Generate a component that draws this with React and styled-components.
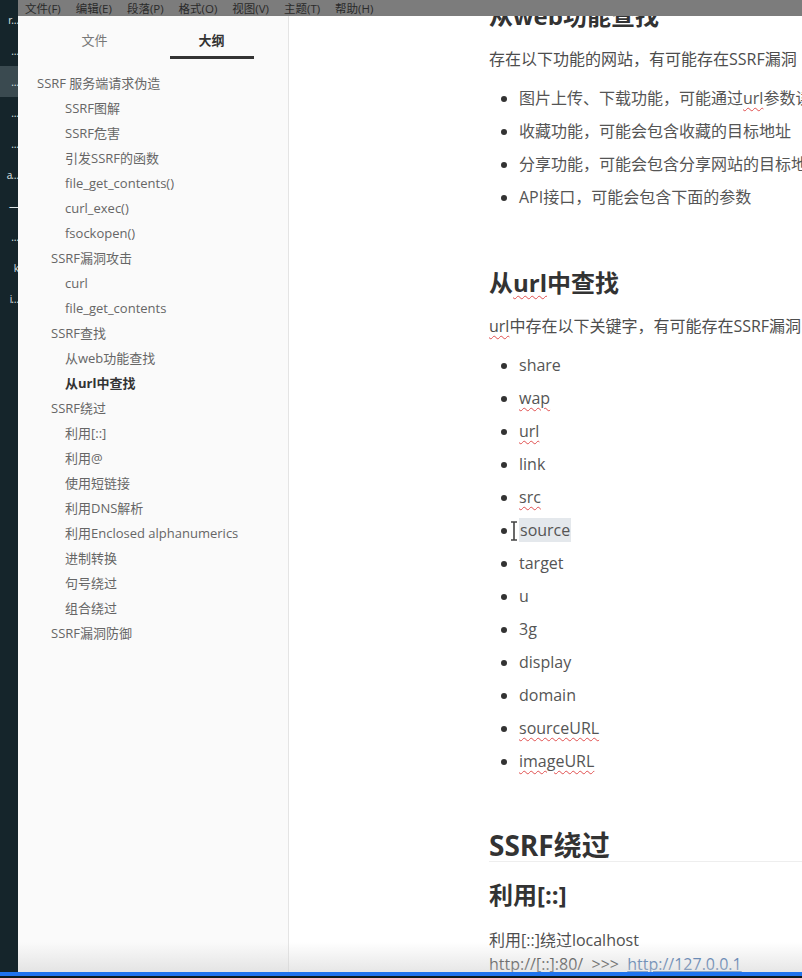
import React from "react";
import styled, { createGlobalStyle } from "styled-components";

const GlobalStyle = createGlobalStyle`
  html, body {
    margin: 0;
    padding: 0;
    background: #ffffff;
    overflow: hidden;
  }
  body {
    font-family: "Open Sans", "Noto Sans CJK SC", sans-serif;
  }
`;

const Screen = styled.div`
  width: 802px;
  height: 978px;
  display: flex;
  flex-direction: column;
  position: relative;
  overflow: hidden;
  background: #15252b;
`;

const Body = styled.div`
  flex: 1;
  display: flex;
  min-height: 0;
`;

const Strip = styled.div`
  width: 18px;
  flex-shrink: 0;
  background: #15252b;
  display: flex;
  flex-direction: column;
  padding-top: 4px;
`;

const StripItem = styled.div`
  height: 31px;
  display: flex;
  align-items: center;
  justify-content: flex-end;
  font-size: 10px;
  line-height: 1;
  color: #dfe6e8;
  letter-spacing: -1px;
  overflow: hidden;
  white-space: nowrap;
  background: ${(p) => (p.active ? "#3a4a50" : "transparent")};
`;

const Window = styled.div`
  flex: 1;
  display: flex;
  flex-direction: column;
  min-width: 0;
  position: relative;
`;

const MenuBar = styled.div`
  height: 16px;
  background: #7c7c7c;
  display: flex;
  align-items: center;
  gap: 15px;
  padding-left: 7px;
  font-size: 11.5px;
  color: #2a2a2a;
  white-space: nowrap;
`;

const Panes = styled.div`
  flex: 1;
  display: flex;
  min-height: 0;
`;

const Sidebar = styled.aside`
  width: 270px;
  flex-shrink: 0;
  background: #fafafa;
  border-right: 1px solid #e4e4e4;
  box-shadow: 1px 0 2px rgba(0, 0, 0, 0.03);
`;

const Tabs = styled.div`
  display: grid;
  grid-template-columns: 117px 117px;
  padding: 0 18px;
`;

const Tab = styled.div`
  height: 43px;
  display: flex;
  flex-direction: column;
  align-items: center;
  font-size: 13px;
  font-weight: ${(p) => (p.active ? 700 : 400)};
  color: ${(p) => (p.active ? "#333" : "#777")};

  span {
    line-height: 18px;
    margin-top: 15px;
  }

  &::after {
    content: "";
    margin-top: auto;
    width: 84px;
    height: 3px;
    background: ${(p) => (p.active ? "#333" : "transparent")};
  }
`;

const Outline = styled.ul`
  list-style: none;
  margin: 12px 0 0;
  padding: 0;
`;

const OutlineItem = styled.li`
  height: 25px;
  line-height: 25px;
  font-size: 13px;
  white-space: nowrap;
  padding-left: ${(p) => 19 + (p.level - 1) * 14}px;
  color: ${(p) => (p.active ? "#333" : "#666")};
  font-weight: ${(p) => (p.active ? 700 : 400)};
`;

const Main = styled.main`
  flex: 1;
  min-width: 0;
  overflow: hidden;
  background: #ffffff;
`;

const Article = styled.article`
  width: 760px;
  padding-left: 200px;
  color: #4d4d4d;
  white-space: nowrap;
`;

const H2 = styled.h2`
  margin: ${(p) => p.mt}px 0 0;
  font-size: 28px;
  line-height: 32px;
  font-weight: 700;
  color: #333;
  border-bottom: 1px solid #eeeeee;
`;

const H3 = styled.h3`
  margin: ${(p) => p.mt}px 0 0;
  font-size: 24px;
  line-height: 34px;
  font-weight: 700;
  color: #333;
`;

const P = styled.p`
  margin: ${(p) => p.mt || 0}px 0 0;
  font-size: 16px;
  line-height: 24px;
  color: ${(p) => (p.dark ? "#3a3a3a" : "inherit")};
`;

const List = styled.ul`
  margin: ${(p) => p.mt}px 0 0;
  padding-left: 30px;
  list-style: disc;

  li::marker {
    color: #333;
  }
`;

const Item = styled.li`
  position: relative;
  font-size: 16px;
  line-height: 33px;
  color: #555;
`;

const Typo = styled.span`
  text-decoration: underline wavy #e05050;
  text-decoration-thickness: 1px;
  text-underline-offset: 3px;
`;

const Selected = styled.span`
  background: #e4e8ec;
  padding: 1px 1px;
`;

const Caret = styled.svg`
  position: absolute;
  left: -9px;
  top: 7px;
`;

const Link = styled.a`
  color: #3f6eaa;
  text-decoration: underline;
`;

const Shade = styled.div`
  position: absolute;
  left: 0;
  right: 0;
  bottom: 0;
  height: 30px;
  background: linear-gradient(to bottom, rgba(210, 210, 210, 0), rgba(210, 210, 210, 0.55));
  pointer-events: none;
`;

const BlueBar = styled.div`
  height: 4px;
  background: #1f73ee;
  flex-shrink: 0;
`;

const Bottom = styled.div`
  height: 2px;
  background: #0d1a1f;
  flex-shrink: 0;
`;

const stripItems = ["r…", "…", "…", "…", "…", "a…", "—", "…", "k", "i…"];

const menus = ["文件(F)", "编辑(E)", "段落(P)", "格式(O)", "视图(V)", "主题(T)", "帮助(H)"];

const outline = [
  [1, "SSRF 服务端请求伪造"],
  [3, "SSRF图解"],
  [3, "SSRF危害"],
  [3, "引发SSRF的函数"],
  [3, "file_get_contents()"],
  [3, "curl_exec()"],
  [3, "fsockopen()"],
  [2, "SSRF漏洞攻击"],
  [3, "curl"],
  [3, "file_get_contents"],
  [2, "SSRF查找"],
  [3, "从web功能查找"],
  [3, "从url中查找", true],
  [2, "SSRF绕过"],
  [3, "利用[::]"],
  [3, "利用@"],
  [3, "使用短链接"],
  [3, "利用DNS解析"],
  [3, "利用Enclosed alphanumerics"],
  [3, "进制转换"],
  [3, "句号绕过"],
  [3, "组合绕过"],
  [2, "SSRF漏洞防御"],
];

const keywords = [
  "share",
  "wap*",
  "url*",
  "link",
  "src*",
  "source!",
  "target",
  "u",
  "3g",
  "display",
  "domain",
  "sourceURL*",
  "imageURL*",
];

const renderKeyword = (k) => {
  if (k.endsWith("*")) return <Typo>{k.slice(0, -1)}</Typo>;
  if (k.endsWith("!"))
    return (
      <>
        <Caret width="8" height="20" viewBox="0 0 8 20">
          <path d="M1 1h6M4 1v18M1 19h6" stroke="#444" strokeWidth="1.6" fill="none" />
        </Caret>
        <Selected>{k.slice(0, -1)}</Selected>
      </>
    );
  return k;
};

export default function App() {
  return (
    <>
      <GlobalStyle />
      <Screen>
        <Body>
          <Strip>
            {stripItems.map((s, i) => (
              <StripItem key={i} active={i === 2}>
                {s}
              </StripItem>
            ))}
          </Strip>
          <Window>
            <MenuBar>
              {menus.map((m) => (
                <span key={m}>{m}</span>
              ))}
            </MenuBar>
            <Panes>
              <Sidebar>
                <Tabs>
                  <Tab>
                    <span>文件</span>
                  </Tab>
                  <Tab active>
                    <span>大纲</span>
                  </Tab>
                </Tabs>
                <Outline>
                  {outline.map(([level, text, active]) => (
                    <OutlineItem key={text} level={level} active={active}>
                      {text}
                    </OutlineItem>
                  ))}
                </Outline>
              </Sidebar>
              <Main>
                <Article>
                  <H3 mt={-17}>从web功能查找</H3>
                  <P mt={14}>存在以下功能的网站，有可能存在SSRF漏洞</P>
                  <List mt={11}>
                    <Item>
                      图片上传、下载功能，可能通过<Typo>url</Typo>参数读取图片
                    </Item>
                    <Item>收藏功能，可能会包含收藏的目标地址</Item>
                    <Item>分享功能，可能会包含分享网站的目标地址</Item>
                    <Item>API接口，可能会包含下面的参数</Item>
                  </List>
                  <H3 mt={52}>
                    从<Typo>url</Typo>中查找
                  </H3>
                  <P mt={14}>
                    <Typo>url</Typo>中存在以下关键字，有可能存在SSRF漏洞
                  </P>
                  <List mt={11}>
                    {keywords.map((k) => (
                      <Item key={k}>{renderKeyword(k)}</Item>
                    ))}
                  </List>
                  <H2 mt={51}>SSRF绕过</H2>
                  <H3 mt={16}>利用[::]</H3>
                  <P mt={16}>利用[::]绕过localhost</P>
                  <P dark>
                    http://[::]:80/&nbsp;&nbsp;&gt;&gt;&gt;&nbsp;&nbsp;
                    <Link href="#">http://127.0.0.1</Link>
                  </P>
                </Article>
              </Main>
            </Panes>
            <Shade />
          </Window>
        </Body>
        <BlueBar />
        <Bottom />
      </Screen>
    </>
  );
}
